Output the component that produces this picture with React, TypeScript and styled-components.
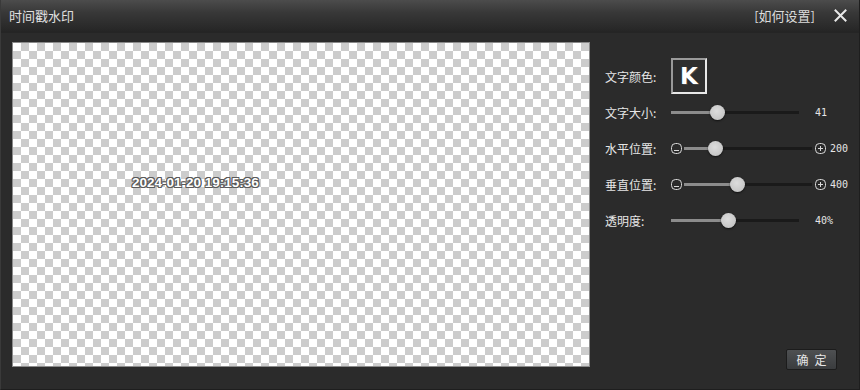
import React from 'react';
import styled, { createGlobalStyle } from 'styled-components';

const Global = createGlobalStyle`
  html, body {
    margin: 0;
    padding: 0;
    background: #2b2b2b;
  }
  body {
    font-family: "Noto Sans CJK SC", "DejaVu Sans", sans-serif;
  }
`;

const Window = styled.div`
  width: 860px;
  height: 390px;
  display: flex;
  flex-direction: column;
  background: #2b2b2b;
  box-sizing: border-box;
  border-left: 1px solid #3a3a3a;
  border-right: 1px solid #1e1e1e;
  border-bottom: 1px solid #1e1e1e;
  overflow: hidden;
`;

const TitleBar = styled.div`
  height: 31px;
  flex-shrink: 0;
  display: flex;
  align-items: center;
  padding: 0 12px 0 8px;
  background: linear-gradient(#4c4c4c 0%, #383838 40%, #262626 100%);
  border-bottom: 2px solid #252525;
  color: #e0e0e0;
  font-size: 13px;
`;

const Title = styled.span`
  flex: 1;
`;

const HelpLink = styled.span`
  color: #dcdcdc;
  font-size: 13px;
  margin-right: 19px;
  cursor: pointer;
`;

const CloseBtn = styled.span`
  display: flex;
  width: 13px;
  height: 13px;
  cursor: pointer;
  svg {
    width: 13px;
    height: 13px;
  }
`;

const Body = styled.div`
  flex: 1;
  display: flex;
  padding: 9px 0 0 11px;
`;

const Canvas = styled.div`
  position: relative;
  width: 578px;
  height: 325px;
  box-sizing: border-box;
  border: 1px solid #8a8a8a;
  background-color: #fff;
  background-image: linear-gradient(45deg, #ccc 25%, transparent 25%, transparent 75%, #ccc 75%),
    linear-gradient(45deg, #ccc 25%, transparent 25%, transparent 75%, #ccc 75%);
  background-size: 16px 16px;
  background-position: 0 0, 8px 8px;
`;

const Stamp = styled.span`
  position: absolute;
  left: 119px;
  top: 132px;
  font-family: "Liberation Sans", sans-serif;
  font-weight: 700;
  font-size: 13.5px;
  line-height: 16px;
  color: #fff;
  text-shadow: -1px -1px 0 #5a5a5a, 1px -1px 0 #5a5a5a, -1px 1px 0 #5a5a5a, 1px 1px 0 #5a5a5a,
    0 -1px 0 #5a5a5a, 0 1px 0 #5a5a5a, -1px 0 0 #5a5a5a, 1px 0 0 #5a5a5a;
`;

const Panel = styled.div`
  flex: 1;
  display: flex;
  flex-direction: column;
  padding: 16px 0 0 15px;
`;

const Row = styled.div`
  height: 36px;
  display: flex;
  align-items: center;
`;

const Label = styled.span`
  width: 66px;
  color: #e6e6e6;
  font-size: 12px;
  flex-shrink: 0;
`;

const ColorBox = styled.div`
  width: 36px;
  height: 36px;
  box-sizing: border-box;
  border: 2px solid #e8e8e8;
  border-top-color: #9a9a9a;
  border-left-color: #9a9a9a;
  background: #2e2e2e;
  display: flex;
  align-items: center;
  justify-content: center;
  color: #fff;
  font-family: "DejaVu Sans", sans-serif;
  font-weight: 700;
  font-size: 23px;
  text-shadow: 1px 1px 0 #444;
`;

const Track = styled.div<{ $width: number }>`
  position: relative;
  width: ${(p) => p.$width}px;
  height: 3px;
  background: #1a1a1a;
  flex-shrink: 0;
`;

const Fill = styled.div`
  position: absolute;
  left: 0;
  top: 0;
  bottom: 0;
  background: #8c8c8c;
`;

const Thumb = styled.div`
  position: absolute;
  top: 50%;
  width: 15px;
  height: 15px;
  margin: -7.5px 0 0 -7.5px;
  border-radius: 50%;
  background: radial-gradient(circle at 45% 40%, #dcdcdc, #bdbdbd);
  box-shadow: 0 1px 2px rgba(0, 0, 0, 0.6);
`;

const StepIcon = styled.span<{ $gap: number }>`
  display: flex;
  width: 11px;
  height: 11px;
  flex-shrink: 0;
  margin: 0 ${(p) => p.$gap}px;
  svg {
    width: 11px;
    height: 11px;
  }
`;

const Value = styled.span<{ $ml: number }>`
  margin-left: ${(p) => p.$ml}px;
  color: #e6e6e6;
  font-family: "DejaVu Sans Mono", monospace;
  font-size: 10px;
`;

const Footer = styled.div`
  flex: 1;
  display: flex;
  justify-content: flex-end;
  align-items: flex-end;
  padding: 0 22px 19px 0;
`;

const OkButton = styled.button`
  width: 51px;
  height: 21px;
  padding: 0;
  border: 1px solid #1c1c1c;
  border-radius: 2px;
  background: linear-gradient(#4e5052, #3a3c3e);
  color: #e6e6e6;
  font-family: "Noto Sans CJK SC", sans-serif;
  font-size: 12px;
  letter-spacing: 6px;
  text-indent: 6px;
  cursor: pointer;
`;

function Minus() {
  return (
    <StepIcon $gap={0} style={{ marginRight: 2 }}>
      <svg viewBox="0 0 11 11" fill="none" stroke="#d8d8d8" strokeWidth="1">
        <rect x="0.5" y="0.5" width="10" height="10" rx="4" />
        <path d="M3 7.5h5" />
      </svg>
    </StepIcon>
  );
}

function Plus() {
  return (
    <StepIcon $gap={3}>
      <svg viewBox="0 0 11 11" fill="none" stroke="#d8d8d8" strokeWidth="1">
        <rect x="0.5" y="0.5" width="10" height="10" rx="4" />
        <path d="M3 5.5h5M5.5 3v5" />
      </svg>
    </StepIcon>
  );
}

function Slider({ width, pos }: { width: number; pos: number }) {
  return (
    <Track $width={width}>
      <Fill style={{ width: pos }} />
      <Thumb style={{ left: pos }} />
    </Track>
  );
}

export default function App() {
  return (
    <>
      <Global />
      <Window>
        <TitleBar>
          <Title>时间戳水印</Title>
          <HelpLink>[如何设置]</HelpLink>
          <CloseBtn>
            <svg viewBox="0 0 13 13" stroke="#e8e8e8" strokeWidth="2" strokeLinecap="square">
              <path d="M1.5 1.5l10 10M11.5 1.5l-10 10" />
            </svg>
          </CloseBtn>
        </TitleBar>
        <Body>
          <Canvas>
            <Stamp>2024-01-20 19:15:36</Stamp>
          </Canvas>
          <Panel>
            <Row>
              <Label>文字颜色:</Label>
              <ColorBox>K</ColorBox>
            </Row>
            <Row>
              <Label>文字大小:</Label>
              <Slider width={128} pos={46} />
              <Value $ml={16}>41</Value>
            </Row>
            <Row>
              <Label>水平位置:</Label>
              <Minus />
              <Slider width={128} pos={31} />
              <Plus />
              <Value $ml={1}>200</Value>
            </Row>
            <Row>
              <Label>垂直位置:</Label>
              <Minus />
              <Slider width={128} pos={53} />
              <Plus />
              <Value $ml={1}>400</Value>
            </Row>
            <Row>
              <Label>透明度:</Label>
              <Slider width={128} pos={57} />
              <Value $ml={16}>40%</Value>
            </Row>
            <Footer>
              <OkButton>确定</OkButton>
            </Footer>
          </Panel>
        </Body>
      </Window>
    </>
  );
}
